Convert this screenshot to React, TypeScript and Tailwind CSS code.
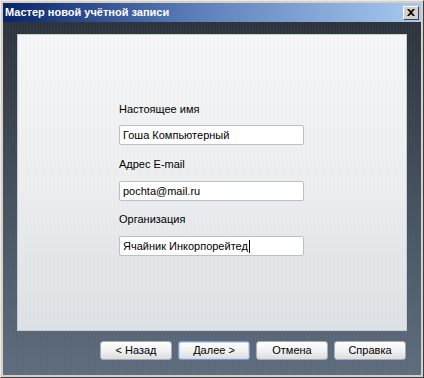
import React from "react";

const font = { fontFamily: "Tahoma, 'Liberation Sans', Arial, sans-serif" };

function Field({ value, caret }: { value: string; caret?: boolean }) {
  return (
    <div className="w-[185px] h-[20px] bg-white border border-[#b9c0c8] rounded-[2px] flex items-center pl-[3px] text-[11px] text-black">
      <span>{value}</span>
      {caret && <span className="w-[1px] h-[13px] bg-black ml-[1px]" />}
    </div>
  );
}

function Btn({ label, def }: { label: string; def?: boolean }) {
  return (
    <div
      className={
        "w-[72px] h-[19px] rounded-[3px] flex items-center justify-center text-[11px] text-black bg-[linear-gradient(to_bottom,#ffffff,#f2f2f2_50%,#dcdcdc)] border " +
        (def ? "border-[#7d9bc9] shadow-[inset_0_0_0_1px_#c6d6ef]" : "border-[#a5abb2]")
      }
    >
      {label}
    </div>
  );
}

export default function App() {
  return (
    <div style={font} className="w-[424px] h-[378px] bg-[#d4d0c8] border-t border-l border-t-[#eeeae2] border-l-[#eeeae2] border-r border-b border-r-[#404040] border-b-[#404040] p-[2px] flex flex-col">
      <div className="h-[19px] bg-[linear-gradient(to_right,#0a246a,#5a7db8_45%,#a6caf0)] flex items-center justify-between pl-[2px] pr-[2px]">
        <span className="text-white text-[11px] font-bold leading-none">Мастер новой учётной записи</span>
        <div className="w-[16px] h-[14px] bg-[#d4d0c8] border border-t-white border-l-white border-r-[#404040] border-b-[#404040] flex items-center justify-center">
          <svg width="8" height="7" viewBox="0 0 8 7">
            <path d="M0 0h2l2 2 2-2h2L5 3.5 8 7H6L4 5 2 7H0l3-3.5z" fill="#000" />
          </svg>
        </div>
      </div>
      <div className="flex-1 flex flex-col pt-[12px] pl-[14px] pr-[14px] bg-[repeating-linear-gradient(90deg,rgba(255,255,255,0.035)_0px,rgba(255,255,255,0.035)_1px,transparent_1px,transparent_3px),linear-gradient(to_bottom,#2c333c,#3f4a56_40%,#5d6c7d)]">
        <div className="h-[297px] border border-[#c9ced4] bg-[repeating-linear-gradient(90deg,rgba(0,0,0,0.012)_0px,rgba(0,0,0,0.012)_1px,transparent_1px,transparent_4px),linear-gradient(to_bottom,#f5f6f7,#eceef0_50%,#dde1e5)] flex flex-col pl-[101px] pt-[67px]">
          <div className="h-[14px] text-[11px] leading-[14px] text-black">Настоящее имя</div>
          <div className="mt-[9px]"><Field value="Гоша Компьютерный" /></div>
          <div className="mt-[12px] h-[14px] text-[11px] leading-[14px] text-black">Адрес E-mail</div>
          <div className="mt-[10px]"><Field value="pochta@mail.ru" /></div>
          <div className="mt-[11px] h-[14px] text-[11px] leading-[14px] text-black">Организация</div>
          <div className="mt-[10px]"><Field value="Ячайник Инкорпорейтед" caret /></div>
        </div>
        <div className="mt-[10px] flex justify-end gap-[6px] pr-[1px]">
          <Btn label="< Назад" />
          <Btn label="Далее >" def />
          <Btn label="Отмена" />
          <Btn label="Справка" />
        </div>
      </div>
    </div>
  );
}
